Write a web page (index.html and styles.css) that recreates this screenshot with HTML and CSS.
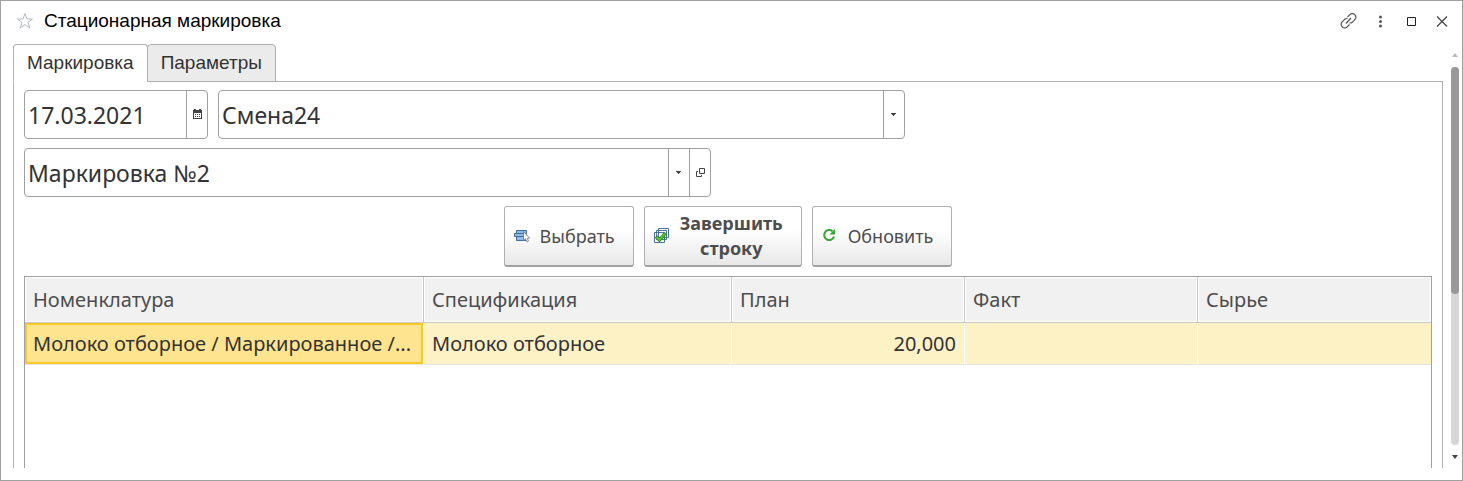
FILE: index.html
```html
<!DOCTYPE html>
<html lang="ru">
<head>
<meta charset="utf-8">
<title>Стационарная маркировка</title>
<link rel="stylesheet" href="styles.css">
</head>
<body>
<div class="window">
  <header class="titlebar">
    <button class="icon-button" aria-label="В избранное">
      <svg width="18" height="18" viewBox="0 0 18 18" fill="none" stroke="#b4b9c0"><path d="M9 1.5 11 7H16.5L12 10.4 13.8 16 9 12.6 4.2 16 6 10.4 1.5 7H7Z"/></svg>
    </button>
    <h1 class="title">Стационарная маркировка</h1>
    <div class="window-tools">
      <button class="icon-button" aria-label="Получить ссылку">
        <svg width="18" height="18" viewBox="0 0 18 18" fill="none" stroke="#555" stroke-width="1.2"><path d="M7.500 5 9.800 2.700a3.400 3.400 0 0 1 5 0a3.400 3.400 0 0 1 0 5L12.200 10.300q-1.200 1-2.700.6M9.500 12.500 7.200 14.800a3.400 3.400 0 0 1-5 0a3.400 3.400 0 0 1 0-5L4.800 7.200q1.200-1 2.700-.6M6 11.500l5-5.500"/></svg>
      </button>
      <button class="icon-button" aria-label="Меню">
        <svg width="18" height="18" viewBox="0 0 18 18" fill="#555"><circle cx="9.500" cy="5" r="1.500"/><circle cx="9.500" cy="9.500" r="1.500"/><circle cx="9.500" cy="14" r="1.500"/></svg>
      </button>
      <button class="icon-button" aria-label="Развернуть">
        <svg width="18" height="18" viewBox="0 0 18 18" fill="none" stroke="#222"><path d="M5.500 5.500h8v8h-8z"/></svg>
      </button>
      <button class="icon-button" aria-label="Закрыть">
        <svg width="18" height="18" viewBox="0 0 18 18" fill="none" stroke="#444" stroke-width="1.200"><path d="M4 4.500 14 14.500M14 4.500 4 14.500"/></svg>
      </button>
    </div>
  </header>
  <div class="body">
    <main class="content">
      <div class="tabs" role="tablist">
        <button class="tab tab-active" role="tab" aria-selected="true">Маркировка</button>
        <button class="tab" role="tab" aria-selected="false">Параметры</button>
      </div>
      <section class="panel" role="tabpanel">
        <div class="row">
          <div class="field field-date">
            <input class="field-value" type="text" value="17.03.2021" aria-label="Дата">
            <button class="field-button" aria-label="Календарь">
              <svg width="11" height="11" viewBox="0 0 11 11"><path fill="#444" fill-rule="evenodd" d="M1 1h1V0h2v1h3V0h2v1h1v9H1zM2 4v5h7V4z"/><path fill="#444" d="M3 5h1v1H3zM5 5h1v1H5zM7 5h1v1H7zM3 7h1v1H3zM5 7h1v1H5zM7 7h1v1H7z"/></svg>
            </button>
          </div>
          <div class="field field-wide">
            <select class="field-value" aria-label="Смена"><option>Смена24</option></select>
            <span class="field-button"><svg width="6" height="3" viewBox="0 0 6 3"><path fill="#444" d="M0 0h5v1H4v1H3v1H2V2H1V1H0z"/></svg></span>
          </div>
        </div>
        <div class="row">
          <div class="field field-wide">
            <select class="field-value" aria-label="Маркировка"><option>Маркировка №2</option></select>
            <span class="field-button"><svg width="6" height="3" viewBox="0 0 6 3"><path fill="#444" d="M0 0h5v1H4v1H3v1H2V2H1V1H0z"/></svg></span>
            <button class="field-button" aria-label="Открыть">
              <svg width="9" height="9" viewBox="0 0 9 9" fill="none" stroke="#444"><path d="M3.500.5h5v5h-5zM2 3.500H.5v5h5V7"/></svg>
            </button>
          </div>
        </div>
        <div class="actions">
          <button class="action">
            <svg width="16" height="16" viewBox="0 0 16 16"><path d="M2.500 2.500h10v3h-10zM2.500 8.500h10v4h-10zM.5 5.500h12v3H.5z" fill="#8fbce6" stroke="#3e6f9e"/><path d="M9.500 3.500v9l2-1.700 1.500 3.200 1.500-.8-1.300-3h2.500z" fill="#fff" stroke="#777" stroke-width=".8"/></svg>
            <span>Выбрать</span>
          </button>
          <button class="action action-main">
            <svg width="16" height="16" viewBox="0 0 16 16"><g fill="#fff" stroke="#4b739b"><path d="M4.500.5h10v9h-10zM2.500 2.500h10v9h-10zM.5 4.500h10v10H.5z"/></g><path d="m2 8.500 3.500 3.500L11.500 5" fill="none" stroke="#2b8a12" stroke-width="3.400"/><path d="m2.500 9 3 3L11 5.500" fill="none" stroke="#5cc92e" stroke-width="1.800"/></svg>
            <span>Завершить строку</span>
          </button>
          <button class="action">
            <svg width="16" height="16" viewBox="0 0 16 16"><path d="M10.500 3.300A5 5 0 1 0 12 8.500" fill="none" stroke="#33a532" stroke-width="2"/><path fill="#33a532" d="M13 1V6.500H7.500z"/></svg>
            <span>Обновить</span>
          </button>
        </div>
        <div class="table-frame">
          <table class="grid">
            <colgroup><col class="col-item"><col class="col-spec"><col class="col-num"><col class="col-num"><col class="col-num"></colgroup>
            <thead><tr><th>Номенклатура</th><th>Спецификация</th><th>План</th><th>Факт</th><th>Сырье</th></tr></thead>
            <tbody><tr><td class="current">Молоко отборное / Маркированное /...</td><td>Молоко отборное</td><td class="number">20,000</td><td></td><td></td></tr></tbody>
          </table>
        </div>
      </section>
    </main>
    <div class="scrollbar" aria-hidden="true">
      <svg width="6" height="4" viewBox="0 0 6 4"><path fill="#bbb" d="M3 0 6 4H0z"/></svg>
      <div class="track"><div class="thumb"></div></div>
      <svg width="6" height="4" viewBox="0 0 6 4"><path fill="#444" d="M0 0h6L3 4z"/></svg>
    </div>
  </div>
</div>
</body>
</html>
```
FILE: styles.css
```css
* { box-sizing: border-box; }
body { margin: 0; background: #fff; color: #333; font-family: "Noto Sans", "Open Sans", sans-serif; }
button, input, select { font: inherit; color: inherit; border: 0; margin: 0; padding: 0; background: none; }
svg { display: block; flex: none; }

.window { display: flex; flex-direction: column; height: 100vh; border: 1px solid #a0a0a0; padding-bottom: 12px; }

.titlebar { display: flex; align-items: center; gap: 10px; height: 40px; padding: 0 11px 0 15px; flex: none; }
.title { margin: 0; flex: 1; font: 400 19px/20px "Liberation Sans", Arial, sans-serif; color: #000; }
.icon-button { display: flex; }
.window-tools { display: flex; gap: 13px; }

.body { display: flex; flex: 1; min-height: 0; padding: 3px 3px 0 12px; }
.content { display: flex; flex-direction: column; flex: 1; min-width: 0; }

.tabs { display: flex; flex: none; position: relative; margin-bottom: -1px; }
.tab { height: 38px; padding: 0 13px; border: 1px solid #b0b0b0; border-radius: 4px 4px 0 0; background: #ebebeb; font: 400 19px/24px "Liberation Sans", Arial, sans-serif; }
.tab + .tab { margin-left: -1px; }
.tab-active { background: #fff; border-bottom-color: #fff; }

.panel { display: flex; flex-direction: column; gap: 9px; flex: 1; min-height: 0; padding: 8px 10px 0; border: 1px solid #b0b0b0; border-bottom: 0; }
.row { display: flex; gap: 10px; flex: none; }

.field { display: flex; height: 49px; border: 1px solid #a0a0a0; border-radius: 4px; overflow: hidden; }
.field-date { flex: 0 0 184px; }
.field-wide { flex: 0 1 687px; }
.field-value { flex: 1; min-width: 0; padding-left: 3px; font-size: 23px; appearance: none; outline: 0; }
.field-button { display: flex; align-items: center; justify-content: center; width: 21px; flex: none; border-left: 1px solid #a0a0a0; }

.actions { display: flex; justify-content: center; gap: 10px; flex: none; }
.action { display: flex; align-items: center; gap: 10px; height: 61px; padding: 0 18px 0 9px; border: 1px solid #b0b0b0; border-bottom: 2px solid #a0a0a0; border-radius: 3px; background: linear-gradient(#fff 40%, #e8e8e8); color: #4d4d4d; font-size: 18px; line-height: 25px; }
.action-main { width: 158px; font-weight: 700; }

.table-frame { flex: 1; min-height: 0; border: 1px solid #a0a0a0; border-bottom: 0; }
.grid { width: 100%; table-layout: fixed; border-collapse: separate; border-spacing: 0; font-size: 20px; line-height: 24px; }
.col-item { width: 399px; }
.col-spec { width: 308px; }
.grid th { height: 46px; padding: 0 8px; text-align: left; font-weight: 400; color: #4d4d4d; background: #f1f1f1; border-right: 1px solid #c8c8c8; border-bottom: 1px solid #c8c8c8; box-shadow: inset 0 0 0 1px #fff; }
.grid td { height: 42px; padding: 0 8px; background: #fdf1c6; border-right: 1px solid #fff; border-bottom: 1px solid #e5e5e5; overflow: hidden; text-overflow: ellipsis; white-space: nowrap; }
.grid th:last-child, .grid td:last-child { border-right: 0; }
.grid .current { background: #ffe48f; box-shadow: inset 0 0 0 2px #f8c826; }
.grid .number { text-align: right; }

.scrollbar { display: flex; flex-direction: column; align-items: center; gap: 10px; width: 8px; margin-left: 8px; padding: 9px 0; }
.track { flex: 1; width: 8px; border-radius: 4px; background: #d6d6d6; }
.thumb { height: 60%; border-radius: 4px; background: #999; }
```
